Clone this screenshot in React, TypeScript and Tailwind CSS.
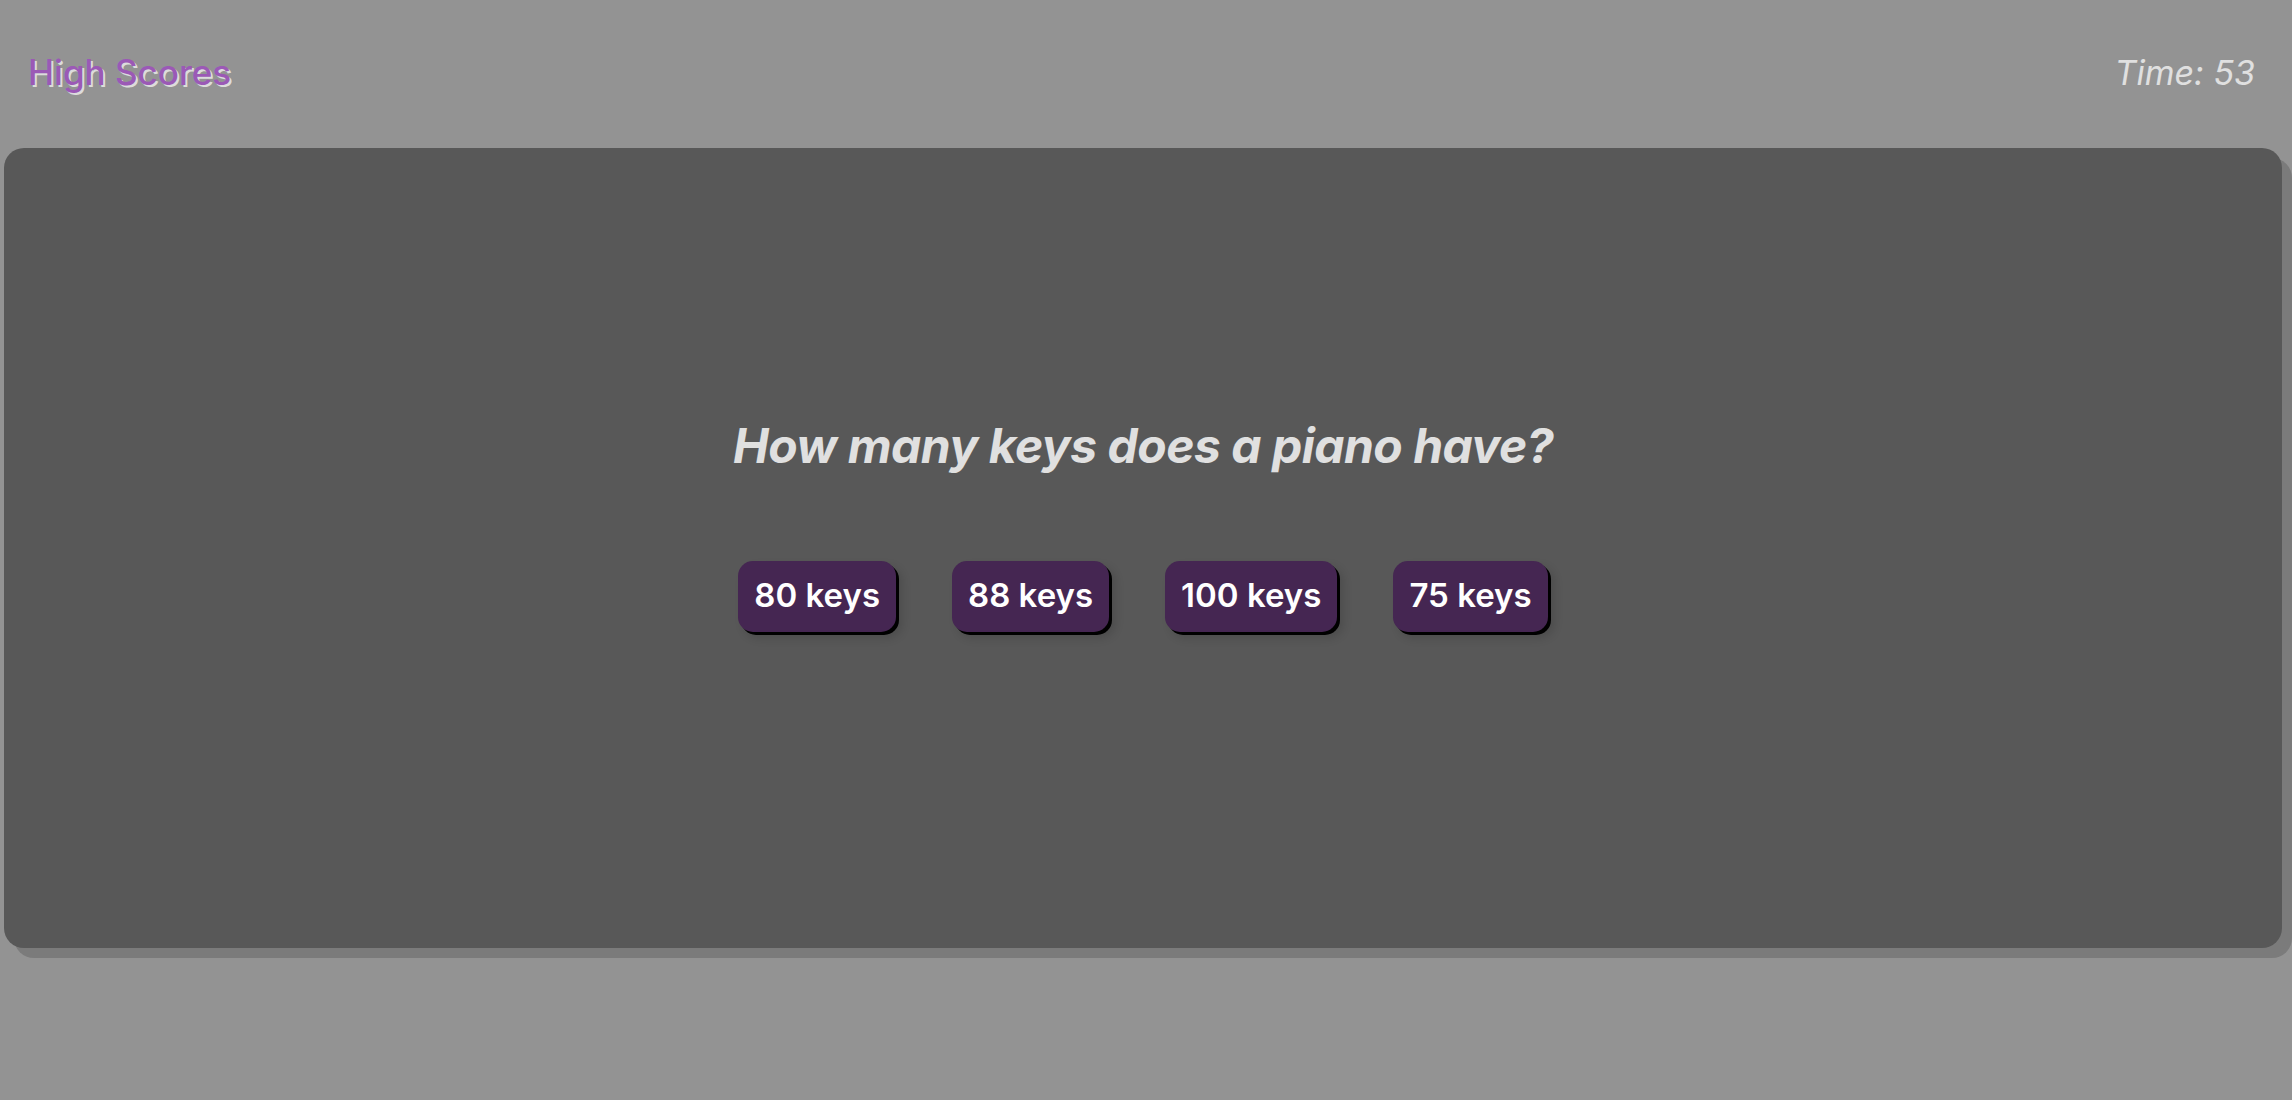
const answers = ["80 keys", "88 keys", "100 keys", "75 keys"];

export default function App() {
  return (
    <div className="min-h-screen bg-[#939393] font-['Inter',sans-serif]">
      <header className="h-[148px] flex items-center justify-between pl-[28px] pr-[37px] pb-[3px]">
        <a className="text-[35px] font-medium text-[#9b59b6] [text-shadow:2px_2px_0_#dcdcdc] cursor-pointer">
          High Scores
        </a>
        <p className="text-[34px] italic text-[#e0e0e0]">Time: 53</p>
      </header>

      <main className="ml-1 mr-[10px] h-[800px] rounded-[20px] bg-[#585858] shadow-[10px_10px_0_#7b7b7b] flex flex-col items-center justify-center">
        <h2 className="text-[48px] font-bold italic text-[#e0e0e0] tracking-[-0.5px]">
          How many keys does a piano have?
        </h2>
        <div className="mt-[79px] mb-[55px] flex gap-[56px]">
          {answers.map((a) => (
            <button
              key={a}
              className="h-[71px] px-[16px] rounded-[15px] bg-[#452652] text-white text-[33px] font-semibold shadow-[3px_3px_0_#000,6px_6px_10px_rgba(0,0,0,0.15)]"
            >
              {a}
            </button>
          ))}
        </div>
      </main>
    </div>
  );
}
